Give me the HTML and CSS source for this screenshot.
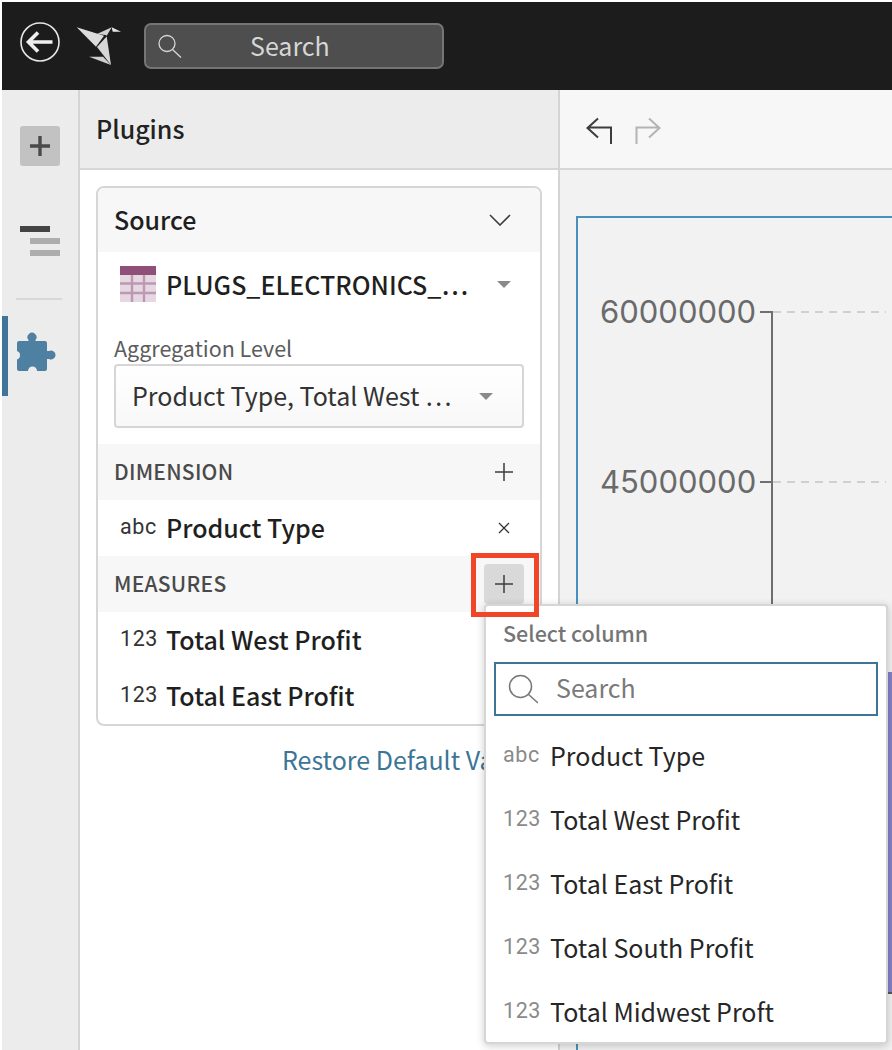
FILE: index.html
```html
<!DOCTYPE html>
<html lang="en">
<head>
<meta charset="utf-8">
<title>Plugins</title>
<link rel="stylesheet" href="styles.css">
</head>
<body>
<div class="app">
  <header class="topbar">
    <svg class="back" viewBox="0 0 40 40" width="40" height="40"><circle cx="20" cy="20" r="19" fill="none" stroke="#e6e6e6" stroke-width="1.6"/><path d="M32.500 20H10M18 10.500L8.500 20l9.500 9.500" fill="none" stroke="#efefef" stroke-width="3.600"/></svg>
    <svg class="logo" viewBox="0 0 46 40" width="46" height="40"><path d="M.7 1.300L28 9.700 20 20.700Z" fill="#dcdcdc"/><path d="M21 8L35.700 1.300 30.700 9.700 29.500 9Z" fill="#d2d2d2"/><path d="M35.700 1.300L45 5.700H36.700Z" fill="#e6e6e6"/><path d="M21 21L30.700 10.500 35 39Z" fill="#d6d6d6"/><path d="M13 30.700H27L35 39Z" fill="#cfcfcf"/></svg>
    <div class="top-search">
      <svg viewBox="0 0 24 24" width="24" height="24"><circle cx="9" cy="9.500" r="8" fill="none" stroke="#d8d8d8" stroke-width="1.300"/><path d="M14.500 15.500L23 23.500" stroke="#d8d8d8" stroke-width="1.300"/></svg>
      <span>Search</span>
    </div>
  </header>
  <div class="main">
    <nav class="rail">
      <div class="rail-add"><svg viewBox="0 0 20 20" width="20" height="20"><path d="M10 0v20M0 10h20" stroke="#4a4a4a" stroke-width="3.400"/></svg></div>
      <div class="rail-lines"><i class="l1"></i><i class="l2"></i><i class="l2"></i></div>
      <div class="rail-sep"></div>
      <div class="rail-active">
        <svg viewBox="0 0 40 40" width="40" height="40"><path d="M2 9H11.500V8A4.500 4.500 0 1 1 18.500 8V9H28a2 2 0 0 1 2 2V19H32A4.500 4.500 0 1 1 32 27H30V37a2 2 0 0 1-2 2H20A4.500 4.500 0 0 0 11 39H2a2 2 0 0 1-2-2V27.500A4.500 4.500 0 0 0 0 19V11a2 2 0 0 1 2-2Z" fill="#4e80a2"/></svg>
      </div>
    </nav>
    <aside class="panel">
      <div class="panel-head">Plugins</div>
      <div class="panel-body">
        <section class="card">
          <div class="card-head"><span>Source</span>
            <svg viewBox="0 0 22 12" width="22" height="12"><path d="M1 1l10 10L21 1" fill="none" stroke="#3d3d3d" stroke-width="1.600"/></svg>
          </div>
          <div class="source-row">
            <svg viewBox="0 0 36 36" width="36" height="36"><rect width="36" height="36" fill="#e6d8e3"/><rect width="36" height="9" fill="#8e5079"/><path d="M0 17.500h36M0 27h36M12 9v27M24 9v27" stroke="#bd98b2" stroke-width="2.400"/></svg>
            <span class="source-name">PLUGS_ELECTRONICS_…</span>
            <i class="caret"></i>
          </div>
          <div class="agg">
            <div class="agg-label">Aggregation Level</div>
            <div class="agg-select"><span>Product Type, Total West …</span><i class="caret"></i></div>
          </div>
          <div class="sec"><span class="sec-name">DIMENSION</span>
            <span class="plus"><svg viewBox="0 0 18 18" width="18" height="18"><path d="M9 0v18M0 9h18" stroke="#3d3d3d" stroke-width="1.500"/></svg></span>
          </div>
          <div class="field"><span class="kind">abc</span><b>Product Type</b>
            <svg class="x" viewBox="0 0 12 12" width="12" height="12"><path d="M1 1l10 10M11 1L1 11" stroke="#333" stroke-width="1.300"/></svg>
          </div>
          <div class="sec"><span class="sec-name">MEASURES</span>
            <span class="plus on"><svg viewBox="0 0 18 18" width="18" height="18"><path d="M9 0v18M0 9h18" stroke="#3d3d3d" stroke-width="1.500"/></svg></span>
          </div>
          <div class="field"><span class="kind">123</span><b>Total West Profit</b></div>
          <div class="field"><span class="kind">123</span><b>Total East Profit</b></div>
        </section>
        <a class="restore">Restore Default Values</a>
      </div>
    </aside>
    <main class="content">
      <div class="toolbar">
        <svg viewBox="0 0 26 28" width="26" height="28"><path d="M12 1.500L1.500 11l10.500 9.500M2 10.500H25V27" fill="none" stroke="#3d3d3d" stroke-width="2"/></svg>
        <svg viewBox="0 0 26 28" width="26" height="28"><path d="M14 1.500L24.500 11l-10.500 9.500M24 10.500H1.500V27" fill="none" stroke="#b4b4b4" stroke-width="2"/></svg>
      </div>
      <div class="canvas">
        <div class="chart">
          <div class="tick t1"><span>60000000</span></div>
          <div class="tick t2"><span>45000000</span></div>
          <div class="axis"></div>
          <div class="bar"></div>
        </div>
      </div>
    </main>
  </div>
  <div class="popup">
    <div class="pop-title">Select column</div>
    <div class="pop-search">
      <svg viewBox="0 0 30 30" width="30" height="30"><circle cx="12.500" cy="12.500" r="11" fill="none" stroke="#777" stroke-width="1.500"/><path d="M20 20L30 29" stroke="#777" stroke-width="1.500"/></svg>
      <span>Search</span>
    </div>
    <ul class="pop-list">
      <li><span class="kind">abc</span>Product Type</li>
      <li><span class="kind">123</span>Total West Profit</li>
      <li><span class="kind">123</span>Total East Profit</li>
      <li><span class="kind">123</span>Total South Profit</li>
      <li><span class="kind">123</span>Total Midwest Proft</li>
    </ul>
  </div>
  <div class="hilite"></div>
</div>
</body>
</html>
```
FILE: styles.css
```css
* { box-sizing: border-box; }
html, body { margin: 0; height: 100%; background: #fff; overflow: hidden; }
body { font-family: "Noto Sans CJK JP", "Noto Sans", sans-serif; color: #1f1f1f; }
.app { position: relative; width: 892px; height: 1050px; padding: 2px 0 0 2px; overflow: hidden; display: flex; flex-direction: column; }

.topbar { height: 88px; flex: none; background: #1c1c1c; display: flex; align-items: center; padding: 0 0 0 18px; }
.back { margin-top: -8px; }
.logo { margin-left: 16px; }
.top-search { margin-left: 22px; width: 300px; height: 46px; background: #4e4e4e; border: 2px solid #757575; border-radius: 7px; display: flex; align-items: center; padding-left: 12px; color: #d6d6d6; font-size: 25px; line-height: 34px; }
.top-search span { margin: -2px 0 0 68px; }

.main { flex: 1; display: flex; min-height: 0; }
.rail { width: 78px; flex: none; background: #ececec; border-right: 2px solid #d4d4d4; padding-top: 36px; display: flex; flex-direction: column; }
.rail-add { width: 40px; height: 40px; margin-left: 18px; background: #c2c2c2; border-radius: 3px; display: flex; align-items: center; justify-content: center; }
.rail-lines { margin: 60px 0 0 18px; display: flex; flex-direction: column; gap: 6px; width: 40px; }
.rail-lines i { display: block; height: 6px; }
.rail-lines .l1 { width: 30px; background: #444; }
.rail-lines .l2 { width: 30px; margin-left: 10px; background: #adadad; }
.rail-sep { height: 2px; width: 46px; margin: 42px 0 0 14px; background: #d8d8d8; }
.rail-active { margin-top: 16px; height: 80px; border-left: 6px solid #3f7599; padding: 16px 0 0 9px; }

.panel { width: 480px; flex: none; border-right: 2px solid #d4d4d4; display: flex; flex-direction: column; }
.panel-head { height: 80px; flex: none; background: #ececec; border-bottom: 2px solid #d6d6d6; padding: 21px 0 0 16px; font-size: 25px; line-height: 34px; font-weight: 500; color: #222; }
.panel-body { padding: 16px 16px 0; }
.card { width: 446px; height: 540px; border: 2px solid #d6d6d6; border-radius: 8px; overflow: hidden; background: #fff; }
.card-head { height: 64px; background: #f7f7f7; display: flex; justify-content: space-between; align-items: center; padding: 0 29px 0 16px; font-size: 25px; line-height: 34px; font-weight: 500; }
.card-head span { margin-top: -2px; }
.source-row { height: 66px; display: flex; align-items: center; padding: 0 0 2px 22px; }
.source-name { margin-left: 10px; width: 331px; font-size: 25px; line-height: 34px; font-weight: 500; white-space: nowrap; }
.caret { display: block; width: 0; height: 0; border-left: 7px solid transparent; border-right: 7px solid transparent; border-top: 7px solid #8a8a8a; }
.agg { padding: 14px 16px 0; }
.agg-label { font-size: 21.500px; line-height: 32px; color: #5c5c5c; }
.agg-select { height: 64px; border: 2px solid #d6d6d6; border-radius: 4px; background: linear-gradient(#fff, #f8f8f8); display: flex; align-items: center; justify-content: space-between; padding: 0 29px 0 16px; font-size: 25px; line-height: 34px; color: #333; white-space: nowrap; }
.agg-select span { margin-top: -2px; }
.sec { height: 56px; margin-top: 16px; background: #f7f7f7; display: flex; align-items: center; justify-content: space-between; padding: 0 16px; font-size: 21px; line-height: 28px; font-weight: 500; color: #4a4a4a; letter-spacing: .25px; }
.sec-name { margin-top: -2px; }
.field + .sec { margin-top: 0; }
.plus { width: 40px; height: 40px; border-radius: 4px; display: flex; align-items: center; justify-content: center; }
.plus.on { background: #d9d9d9; }
.field { height: 56px; display: flex; align-items: center; padding: 0 0 2px 22px; font-size: 25px; line-height: 34px; position: relative; }
.field b { font-weight: 500; margin-left: 9px; }
.field .x { position: absolute; right: 30px; top: 22px; }
.kind { font-family: "Roboto", sans-serif; font-size: 21.500px; line-height: 26px; letter-spacing: .6px; width: 37px; flex: none; color: #333; }
.restore { display: block; margin: 14px 0 0 186px; font-size: 25px; line-height: 38px; color: #3c7596; white-space: nowrap; }

.content { flex: 1; min-width: 0; display: flex; flex-direction: column; }
.toolbar { height: 80px; flex: none; background: #f7f7f7; border-bottom: 2px solid #d6d6d6; display: flex; align-items: flex-start; gap: 23px; padding: 27px 0 0 26px; }
.canvas { flex: 1; background: #f2f2f2; padding: 46px 0 0 16px; min-height: 0; }
.chart { position: relative; height: 900px; border: solid #4a90bd; border-width: 2px 0 0 2px; }
.tick { position: absolute; left: 22px; width: 286px; height: 2px; background: repeating-linear-gradient(90deg, #d0d0d0 0 8px, transparent 8px 14px) 173px 0 no-repeat; background-size: 113px 2px; }
.tick::before { content: ""; position: absolute; left: 160px; top: 0; width: 13px; height: 2px; background: #6f6f6f; }
.tick span { position: absolute; left: 0; top: -21px; font-family: "Inter", "Liberation Sans", sans-serif; font-size: 31px; line-height: 44px; color: #6a6a6a; }
.t1 { top: 93px; }
.t2 { top: 263px; }
.axis { position: absolute; left: 193px; top: 93px; width: 2px; height: 700px; background: #6f6f6f; }
.bar { position: absolute; left: 310px; top: 454px; width: 8px; height: 322px; background: #8181c6; border-bottom: 2px solid #555; }

.hilite { position: absolute; left: 471px; top: 553px; width: 68px; height: 64px; border: 5px solid #f04526; }
.popup { position: absolute; left: 484px; top: 604px; width: 404px; height: 440px; background: #fff; border: 2px solid #d6d6d6; border-radius: 4px; box-shadow: 0 2px 8px rgba(0,0,0,.2); padding: 12px 8px 0 8px; }
.pop-title { padding-left: 9px; font-size: 21.500px; line-height: 30px; font-weight: 500; color: #757575; }
.pop-search { margin-top: 14px; width: 384px; height: 54px; border: 2px solid #3c7596; display: flex; align-items: center; padding-left: 12px; color: #7a7a7a; font-size: 25px; line-height: 34px; }
.pop-search span { margin: -4px 0 0 18px; }
.pop-list { list-style: none; margin: 8px 0 0; padding: 0; }
.pop-list li { height: 64px; display: flex; align-items: center; padding: 0 0 2px 9px; font-size: 25px; line-height: 34px; color: #262626; }
.pop-list .kind { color: #8a8a8a; width: 47px; }
```
